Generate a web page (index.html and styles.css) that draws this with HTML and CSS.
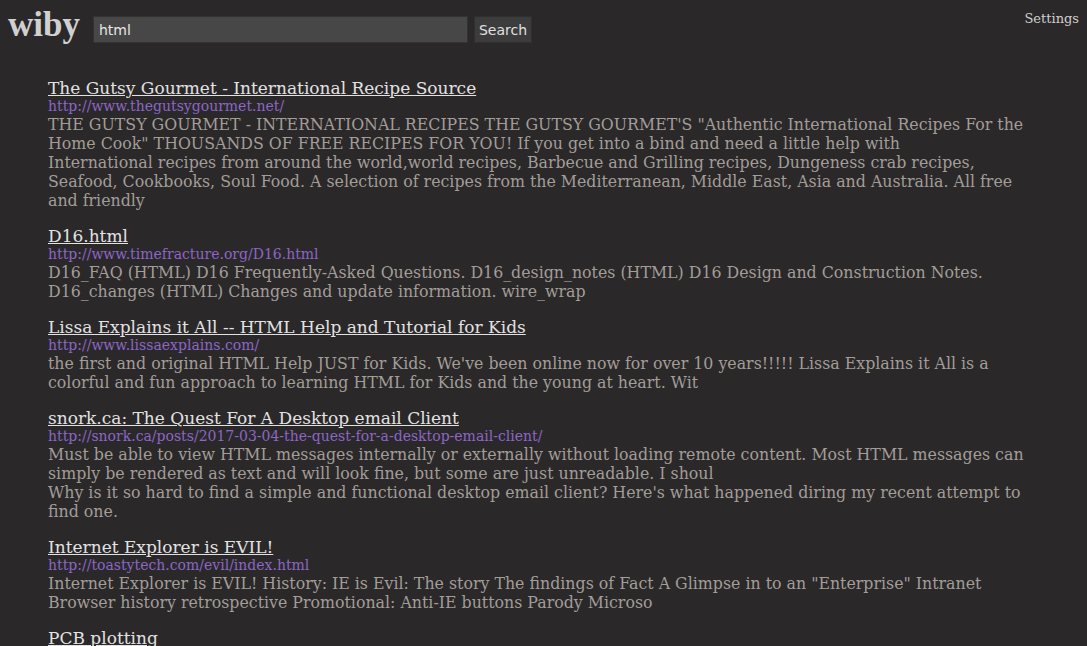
FILE: index.html
```html
<!DOCTYPE html>
<html>
<head>
<meta charset="utf-8">
<title>wiby - html</title>
<link rel="stylesheet" href="styles.css">
</head>
<body>
<header class="top">
  <form class="search">
    <a class="logo" href="#">wiby</a>
    <input class="query" type="text" value="html">
    <button class="go" type="button">Search</button>
  </form>
  <a class="settings" href="#">Settings</a>
</header>
<main class="results">
  <section class="result">
    <a class="title" href="#">The Gutsy Gourmet - International Recipe Source</a>
    <div class="url">http://www.thegutsygourmet.net/</div>
    <p class="desc">THE GUTSY GOURMET - INTERNATIONAL RECIPES THE GUTSY GOURMET'S "Authentic International Recipes For the Home Cook" THOUSANDS OF FREE RECIPES FOR YOU! If you get into a bind and need a little help with<br>International recipes from around the world,world recipes, Barbecue and Grilling recipes, Dungeness crab recipes, Seafood, Cookbooks, Soul Food. A selection of recipes from the Mediterranean, Middle East, Asia and Australia. All free and friendly</p>
  </section>
  <section class="result">
    <a class="title" href="#">D16.html</a>
    <div class="url">http://www.timefracture.org/D16.html</div>
    <p class="desc">D16_FAQ (HTML) D16 Frequently-Asked Questions. D16_design_notes (HTML) D16 Design and Construction Notes. D16_changes (HTML) Changes and update information. wire_wrap</p>
  </section>
  <section class="result">
    <a class="title" href="#">Lissa Explains it All -- HTML Help and Tutorial for Kids</a>
    <div class="url">http://www.lissaexplains.com/</div>
    <p class="desc">the first and original HTML Help JUST for Kids. We've been online now for over 10 years!!!!! Lissa Explains it All is a colorful and fun approach to learning HTML for Kids and the young at heart. Wit</p>
  </section>
  <section class="result">
    <a class="title" href="#">snork.ca: The Quest For A Desktop email Client</a>
    <div class="url">http://snork.ca/posts/2017-03-04-the-quest-for-a-desktop-email-client/</div>
    <p class="desc">Must be able to view HTML messages internally or externally without loading remote content. Most HTML messages can simply be rendered as text and will look fine, but some are just unreadable. I shoul<br>Why is it so hard to find a simple and functional desktop email client? Here's what happened diring my recent attempt to find one.</p>
  </section>
  <section class="result">
    <a class="title" href="#">Internet Explorer is EVIL!</a>
    <div class="url">http://toastytech.com/evil/index.html</div>
    <p class="desc">Internet Explorer is EVIL! History: IE is Evil: The story The findings of Fact A Glimpse in to an "Enterprise" Intranet Browser history retrospective Promotional: Anti-IE buttons Parody Microso</p>
  </section>
  <section class="result">
    <a class="title" href="#">PCB plotting</a>
  </section>
</main>
</body>
</html>
```

FILE: styles.css
```css
html, body {
  margin: 0;
  padding: 0;
  background: #2a2829;
}
body {
  font-family: "DejaVu Serif", serif;
  color: #a39d98;
  overflow: hidden;
}
.top {
  display: flex;
  justify-content: space-between;
  align-items: flex-start;
  padding: 0 8px;
}
.search {
  display: flex;
  align-items: flex-start;
  padding-top: 16px;
  margin: 0;
}
.logo {
  font-family: "Liberation Serif", serif;
  font-weight: bold;
  font-size: 35px;
  line-height: 17px;
  color: #d0d0d0;
  text-decoration: none;
  margin-right: 13px;
}
.query {
  width: 375px;
  height: 27px;
  box-sizing: border-box;
  background: #474747;
  border: 1px solid #333;
  color: #e6e6e6;
  font-family: "DejaVu Sans", sans-serif;
  font-size: 14px;
  padding: 0 5px;
  margin: 0;
}
.go {
  height: 27px;
  box-sizing: border-box;
  margin: 0 0 0 6px;
  background: #3c3c3c;
  border: 1px solid #2f2f2f;
  color: #e0e0e0;
  font-family: "DejaVu Sans", sans-serif;
  font-size: 14px;
  padding: 0 4px;
}
.settings {
  font-size: 13px;
  color: #cfcfcf;
  text-decoration: none;
  margin-top: 11px;
}
.results {
  padding: 35px 48px 0 48px;
}
.result {
  margin-bottom: 16px;
}
.title {
  display: block;
  width: max-content;
  font-size: 17px;
  line-height: 20px;
  color: #e2e2e2;
  text-decoration: underline;
}
.url {
  font-size: 14px;
  line-height: 17px;
  color: #8d66c6;
}
.desc {
  margin: 0;
  font-size: 15.8px;
  line-height: 19px;
  color: #a39d98;
}
```
